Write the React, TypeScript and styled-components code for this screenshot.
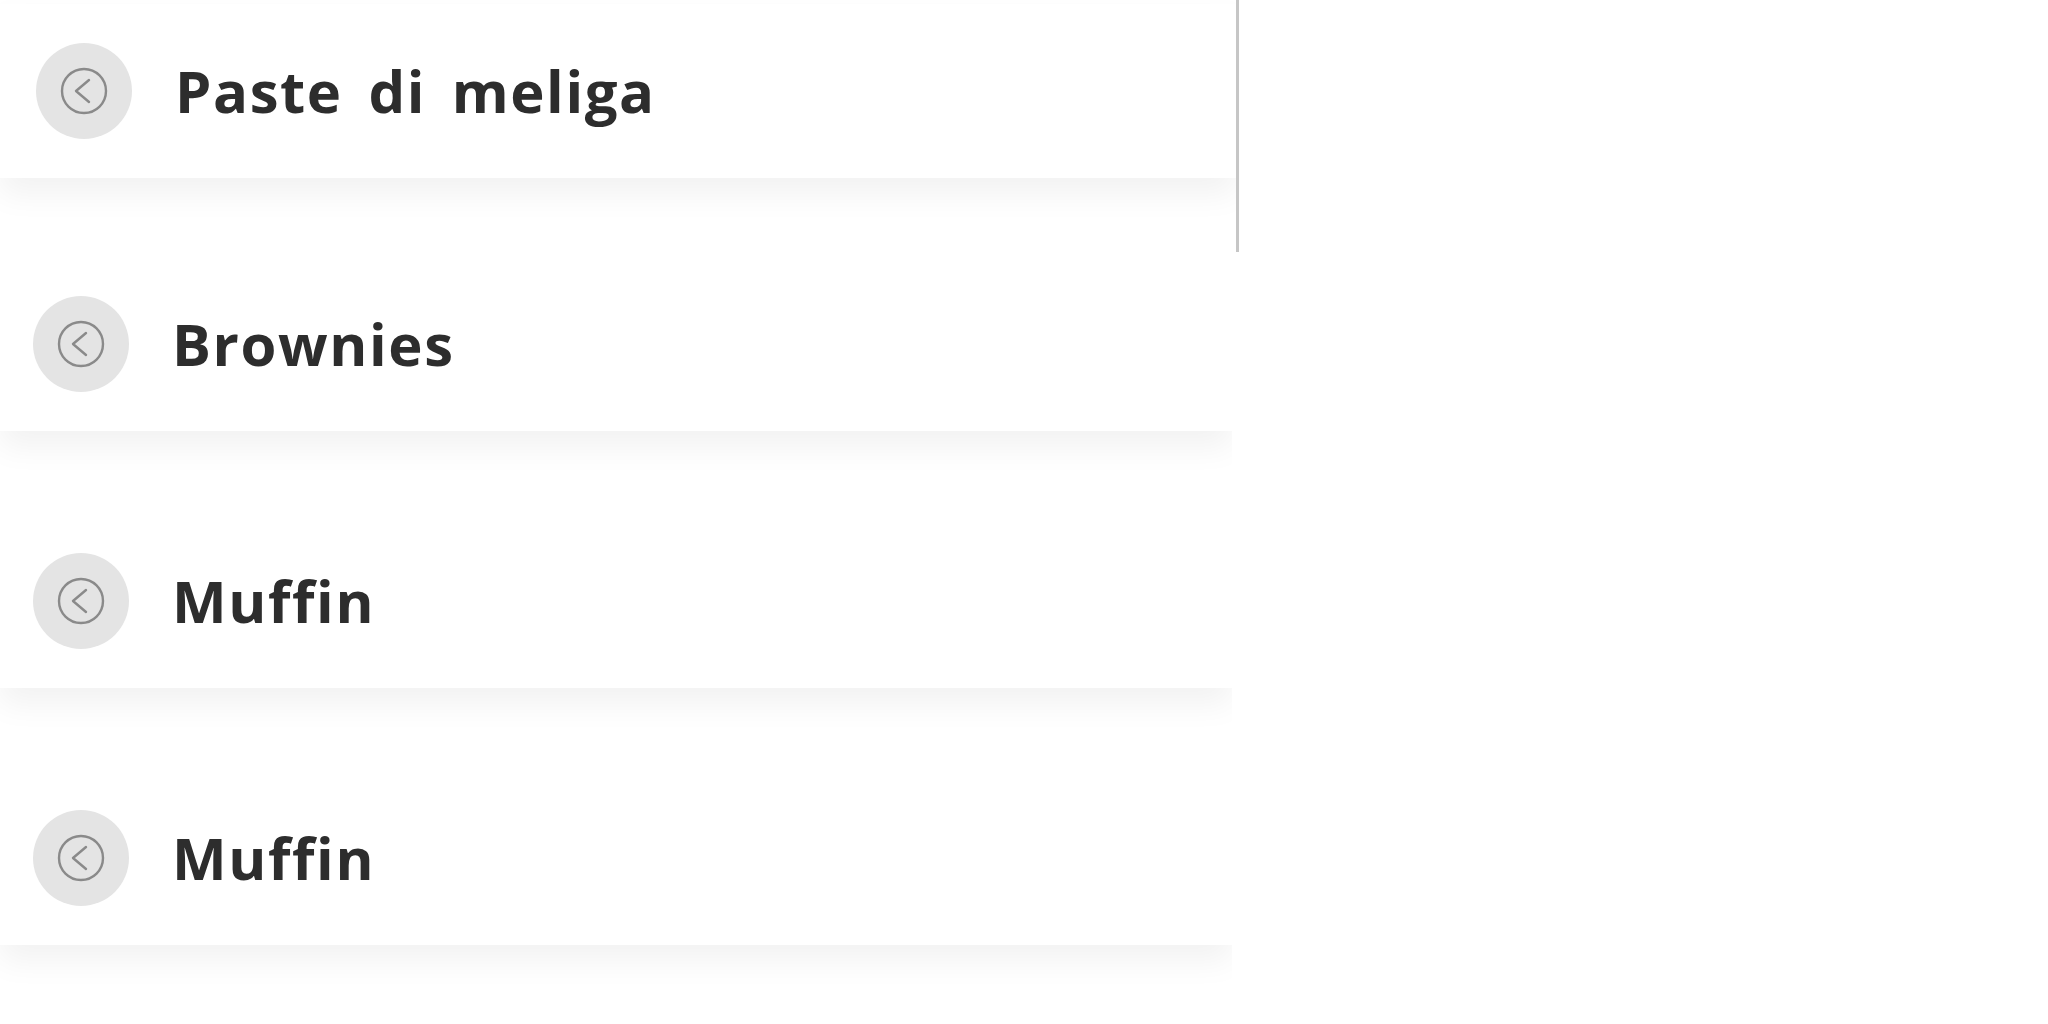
import React from 'react'
import styled, { createGlobalStyle } from 'styled-components'

const GlobalStyle = createGlobalStyle`
  html, body {
    margin: 0;
    padding: 0;
    background: #ffffff;
  }
  body {
    font-family: 'Open Sans', Lato, 'Liberation Sans', sans-serif;
    -webkit-font-smoothing: antialiased;
  }
`

const List = styled.div`
  display: flex;
  flex-direction: column;
  width: 1232px;
`

// each slot clips the card shadow at the list edge
const Slot = styled.div<{ $dragging?: boolean }>`
  height: 257px;
  width: 1232px;
  overflow: hidden;

  ${({ $dragging }) =>
    $dragging &&
    `
    height: 252px;
    width: 1236px;
    margin-bottom: 5px;
    border-right: 3px solid #c6c6c6;
  `}
`

const Card = styled.div<{ $dragging?: boolean }>`
  display: flex;
  align-items: center;
  gap: 43px;
  height: 174px;
  padding-left: ${({ $dragging }) => ($dragging ? '36px' : '33px')};
  background: #ffffff;
  box-shadow: 0 16px 30px rgba(0, 0, 0, 0.055);
  transform: ${({ $dragging }) => ($dragging ? 'translateY(4px)' : 'none')};
`

const BackButton = styled.button`
  display: flex;
  align-items: center;
  justify-content: center;
  flex-shrink: 0;
  width: 96px;
  height: 96px;
  padding: 0;
  border: none;
  border-radius: 50%;
  background: #e4e4e4;
  cursor: pointer;
`

const Title = styled.h2`
  margin: 0;
  font-family: 'Open Sans', Lato, 'Liberation Sans', sans-serif;
  font-size: 58px;
  font-weight: 700;
  letter-spacing: 1.6px;
  word-spacing: 9px;
  color: #2d2d2d;
  line-height: 1;
`

const BackIcon = () => (
  <svg width="48" height="48" viewBox="0 0 48 48" fill="none">
    <circle cx="24" cy="24" r="22" stroke="#8a8a8a" strokeWidth="2.4" />
    <path d="M29 13 L16 24 L29 35" stroke="#8a8a8a" strokeWidth="2.4" strokeLinecap="round" strokeLinejoin="round" />
  </svg>
)

const ITEMS = ['Paste di meliga', 'Brownies', 'Muffin', 'Muffin']

export default function App() {
  return (
    <>
      <GlobalStyle />
      <List>
        {ITEMS.map((name, i) => (
          <Slot key={i} $dragging={i === 0}>
            <Card $dragging={i === 0}>
              <BackButton aria-label="back">
                <BackIcon />
              </BackButton>
              <Title>{name}</Title>
            </Card>
          </Slot>
        ))}
      </List>
    </>
  )
}
